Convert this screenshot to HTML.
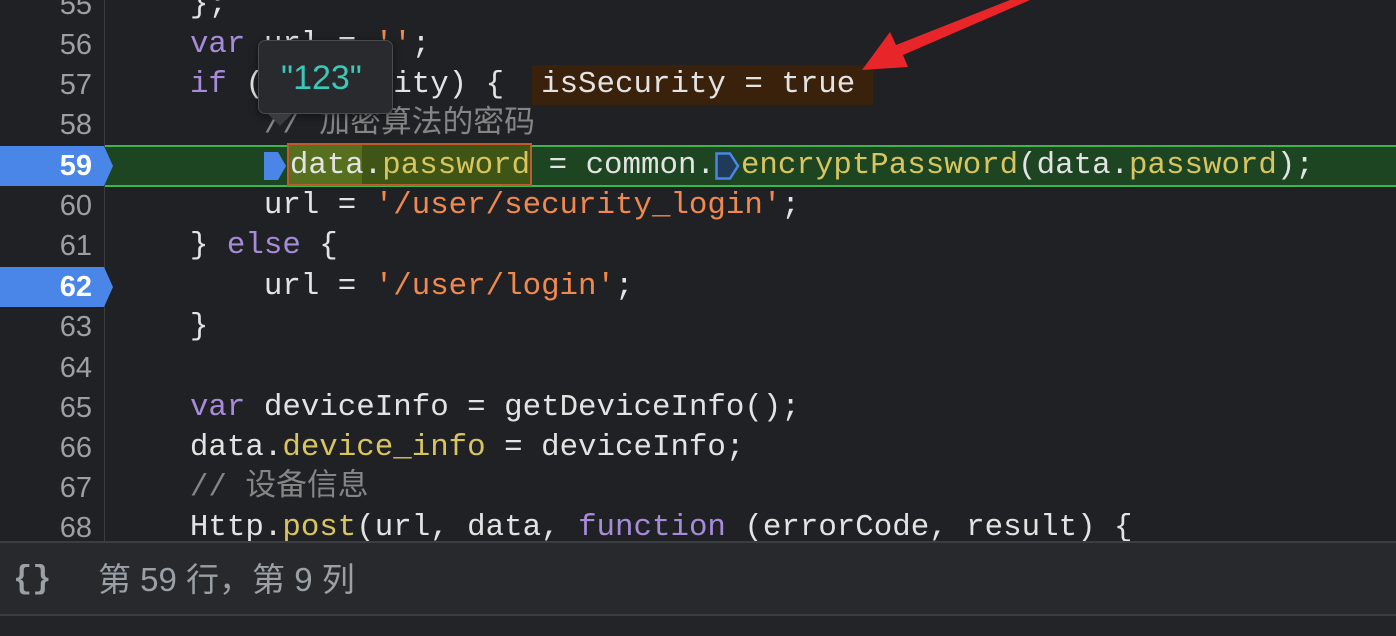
<!DOCTYPE html>
<html><head><meta charset="utf-8"><style>
body{margin:0;width:1396px;height:636px;background:#202124;overflow:hidden;position:relative;font-family:"Liberation Mono","Noto Sans CJK SC",monospace;}
.ln{position:absolute;left:0;width:92px;text-align:right;color:#9aa0a6;font-size:29px;height:40px;line-height:40px;font-family:"Liberation Sans",sans-serif;}
.c{position:absolute;left:116px;white-space:pre;color:#e3e3e3;font-size:30.8px;height:40px;line-height:40px;}
.k{color:#a78bdb}.s{color:#f0894f}.p{color:#d9c55f}.cm{color:#858585}
.gut{position:absolute;left:104px;top:0;width:1px;height:541px;background:#3c3c3c}
.bp{position:absolute;left:0;width:104px;height:40px;background:#4a86e8}
.bp:after{content:"";position:absolute;left:104px;top:0;border-left:9px solid #4a86e8;border-top:20px solid transparent;border-bottom:20px solid transparent}
</style></head><body>
<div class="gut"></div>
<div style="position:absolute;left:105px;top:145px;width:1291px;height:42px;background:#1d4521;border-top:2px solid #3eb44f;border-bottom:2px solid #3eb44f;box-sizing:border-box"></div>
<div class="bp" style="top:146px"></div>
<div class="bp" style="top:267px"></div>
<div style="position:absolute;left:532px;top:65px;width:341px;height:40px;background:#3a210c"></div>
<div style="position:absolute;left:287px;top:143px;width:245px;height:43px;border:2px solid #c0592c;box-sizing:border-box;background:#3f5516"></div>
<div style="position:absolute;left:289px;top:145px;width:73px;height:39px;background:#56701f"></div>

<div class="ln" style="top:-15px">55</div><div class="c" style="top:-15px">    };</div>
<div class="ln" style="top:25px">56</div><div class="c" style="top:25px">    <span class="k">var</span> url = <span class="s">''</span>;</div>
<div class="ln" style="top:65px">57</div><div class="c" style="top:65px">    <span class="k">if</span> (isSecurity) {  isSecurity = true</div>
<div class="ln" style="top:105px">58</div><div class="c cm" style="top:105px">        // 加密算法的密码</div>
<div class="ln" style="top:146px;color:#fff;font-weight:bold">59</div><div class="c" style="top:146px">        <span style="display:inline-block;width:26px;height:30px;vertical-align:middle;position:relative"><svg width="24" height="28" style="position:absolute;left:0;top:2px"><path d="M0 0H14L22 14L14 28H0Z" fill="#4a86e8"/></svg></span>data.<span class="p">password</span> = common.<span style="display:inline-block;width:26px;height:30px;vertical-align:middle;position:relative"><svg width="26" height="28" style="position:absolute;left:0;top:2px"><path d="M1.5 1.5H15L23 14L15 26.5H1.5Z" fill="#203a5a" stroke="#4a86e8" stroke-width="2.5"/></svg></span><span class="p">encryptPassword</span>(data.<span class="p">password</span>);</div>
<div class="ln" style="top:186px">60</div><div class="c" style="top:186px">        url = <span class="s">'/user/security_login'</span>;</div>
<div class="ln" style="top:226px">61</div><div class="c" style="top:226px">    } <span class="k">else</span> {</div>
<div class="ln" style="top:267px;color:#fff;font-weight:bold">62</div><div class="c" style="top:267px">        url = <span class="s">'/user/login'</span>;</div>
<div class="ln" style="top:307px">63</div><div class="c" style="top:307px">    }</div>
<div class="ln" style="top:348px">64</div>
<div class="ln" style="top:388px">65</div><div class="c" style="top:388px">    <span class="k">var</span> deviceInfo = getDeviceInfo();</div>
<div class="ln" style="top:428px">66</div><div class="c" style="top:428px">    data.<span class="p">device_info</span> = deviceInfo;</div>
<div class="ln" style="top:468px">67</div><div class="c cm" style="top:468px">    // 设备信息</div>
<div class="ln" style="top:508px">68</div><div class="c" style="top:508px">    Http.<span class="p">post</span>(url, data, <span class="k">function</span> (errorCode, result) {</div>

<div style="position:absolute;left:258px;top:40px;width:135px;height:74px;background:#292a2d;border:1px solid #4a4b4e;border-radius:7px;box-sizing:border-box;box-shadow:0 2px 8px rgba(0,0,0,.5)"></div>
<div style="position:absolute;left:268px;top:114px;width:0;height:0;border-left:12px solid transparent;border-right:12px solid transparent;border-top:12px solid #3a3b3e"></div>
<div style="position:absolute;left:281px;top:57px;color:#3cc8b8;font-size:34px;font-family:'Liberation Sans',sans-serif;line-height:42px">"123"</div>

<svg style="position:absolute;left:0;top:0" width="1396" height="636"><path d="M1010 0L1030 0L903 55L908 67L862 70L890 32L896 45Z" fill="#e8262a"/></svg>

<div style="position:absolute;left:0;top:541px;width:1396px;height:75px;background:#28292c;border-top:2px solid #3c3d40;border-bottom:2px solid #3c3d40;box-sizing:border-box"></div>
<div style="position:absolute;left:0;top:616px;width:1396px;height:20px;background:#232427"></div>
<div style="position:absolute;left:13px;top:558px;color:#9aa0a6;font-size:32px;line-height:44px;font-family:'Liberation Mono',monospace;font-weight:bold">{}</div>
<div style="position:absolute;left:98px;top:557px;color:#9aa0a6;font-size:33px;line-height:46px;font-family:'Liberation Sans','Noto Sans CJK SC',sans-serif">第 59 行，第 9 列</div>
</body></html>
